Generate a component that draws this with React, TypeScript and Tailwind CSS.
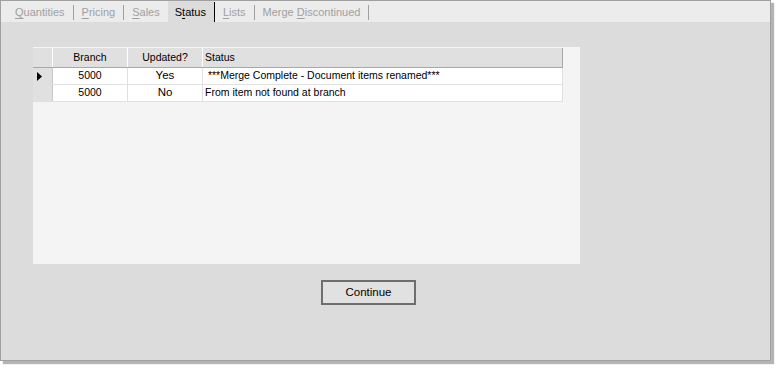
const tabs = [
  { pre: "", key: "Q", post: "uantities" },
  { pre: "", key: "P", post: "ricing" },
  { pre: "", key: "S", post: "ales" },
  { pre: "S", key: "t", post: "atus", active: true },
  { pre: "", key: "L", post: "ists" },
  { pre: "Merge ", key: "D", post: "iscontinued" },
];

const rows = [
  { branch: "5000", updated: "Yes", status: " ***Merge Complete - Document items renamed***", current: true },
  { branch: "5000", updated: "No", status: "From item not found at branch", current: false },
];

export default function App() {
  return (
    <div className="w-[777px] h-[368px] bg-white font-['Liberation_Sans',Arial,sans-serif]">
      <div className="w-[771px] h-[361px] flex flex-col border border-[#a0a0a0] bg-[#dcdcdc] shadow-[3px_3px_1px_#b4b4b4]">
        {/* tab strip */}
        <div className="h-[21px] flex items-stretch bg-[#ececec] pl-[6px] text-[11px] text-[#a0a0a0]">
          {tabs.map((t, i) => (
            <div key={i} className="flex items-center">
              <span
                className={
                  t.active
                    ? "h-full flex items-center pt-[2px] pl-[7px] pr-[8px] bg-[#dcdcdc] text-black whitespace-pre"
                    : "h-full flex items-center pt-[2px] px-[8px] whitespace-pre"
                }
              >
                {t.pre}
                <span className="underline underline-offset-2">{t.key}</span>
                {t.post}
              </span>
              {i !== 2 && (
                <span
                  className={
                    t.active
                      ? "w-px h-[20px] self-end bg-black"
                      : "w-px h-[15px] mt-[2px] bg-[#a0a0a0]"
                  }
                />
              )}
            </div>
          ))}
        </div>

        {/* body */}
        <div className="flex-1 flex flex-col pl-[32px] pt-[25px]">
          <div className="w-[547px] h-[217px] bg-[#f4f4f4] pt-px text-[10.5px] text-black">
            <div className="flex h-[20px] bg-[#e0e0e0] border-b border-[#a8a8a8] w-[530px] border-r">
              <div className="w-[20px] border-r border-white" />
              <div className="w-[75px] border-r border-white flex items-center justify-center">Branch</div>
              <div className="w-[75px] border-r border-white flex items-center justify-center">Updated?</div>
              <div className="flex-1 flex items-center pl-[2px]">Status</div>
            </div>
            {rows.map((r, i) => (
              <div key={i} className="flex h-[17px] w-[530px] border-b border-[#e0e0e0] border-r">
                <div className="w-[20px] bg-[#e0e0e0] border-r border-[#c8c8c8] flex items-center pl-[4px]">
                  {r.current && (
                    <svg width="6" height="9" viewBox="0 0 6 9">
                      <path d="M0 0 L5 4.5 L0 9 Z" fill="#000" />
                    </svg>
                  )}
                </div>
                <div className="w-[75px] bg-white border-r border-[#e0e0e0] flex items-center justify-center">{r.branch}</div>
                <div className="w-[75px] bg-white border-r border-[#e0e0e0] flex items-center justify-center text-[11.5px]">{r.updated}</div>
                <div className="flex-1 bg-white flex items-center pl-[2px] whitespace-pre">{r.status}</div>
              </div>
            ))}
          </div>

          <button className="mt-[16px] ml-[288px] w-[95px] h-[25px] bg-[#e1e1e1] border-2 border-[#6e6e6e] text-[11.5px] text-black flex items-center justify-center">
            Continue
          </button>
        </div>
      </div>
    </div>
  );
}
